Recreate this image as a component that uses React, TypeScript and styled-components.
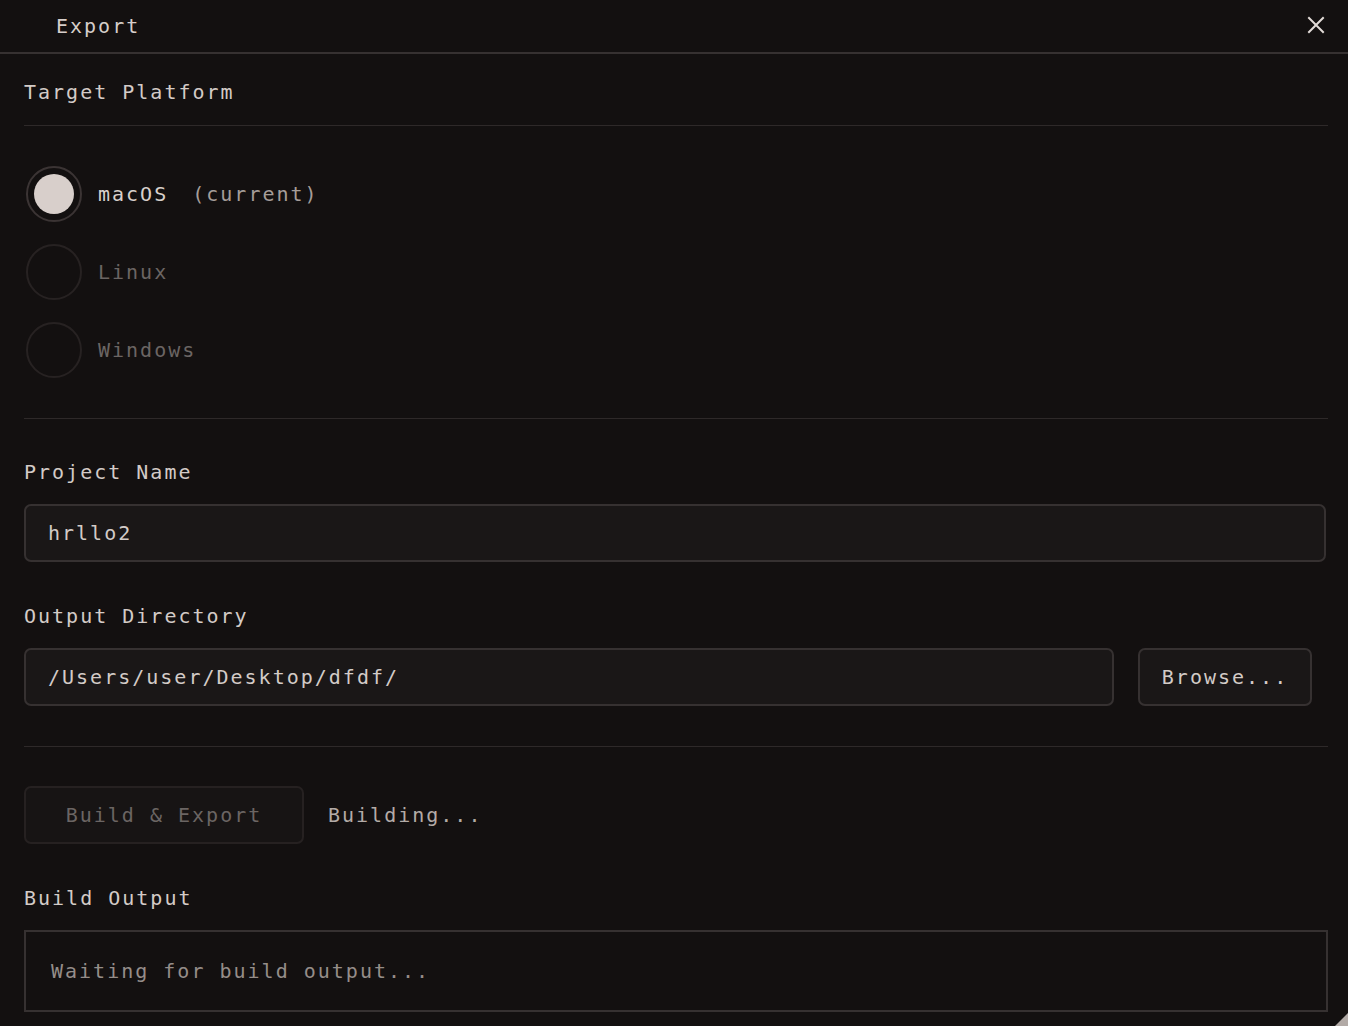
import styled, { createGlobalStyle } from 'styled-components';

const GlobalStyle = createGlobalStyle`
  html, body {
    margin: 0;
    padding: 0;
    background: #131010;
  }
  body {
    font-family: 'DejaVu Sans Mono', 'Liberation Mono', monospace;
    color: #d6ceca;
  }
`;

const Window = styled.div`
  position: relative;
  width: 1348px;
  height: 1026px;
  background: #131010;
  overflow: hidden;
  font-size: 20px;
  letter-spacing: 2px;
  line-height: 24px;
`;

const Header = styled.div`
  height: 52px;
  border-bottom: 2px solid #363131;
  display: flex;
  align-items: center;
  justify-content: space-between;
  padding: 0 20px 0 56px;
`;

const Title = styled.div`
  color: #d6ceca;
`;

const CloseButton = styled.button`
  width: 24px;
  height: 24px;
  padding: 0;
  border: none;
  background: transparent;
  display: flex;
  align-items: center;
  justify-content: center;
  margin-top: -2px;
`;

const Body = styled.div`
  padding: 26px 20px 0 24px;
  display: flex;
  flex-direction: column;
`;

const Label = styled.div<{ gap?: number }>`
  color: #d3cbc7;
  margin-bottom: ${({ gap }) => gap ?? 20}px;
`;

const Divider = styled.div<{ top: number; bottom: number }>`
  height: 1px;
  background: #2e2929;
  margin: ${({ top, bottom }) => `${top}px 0 ${bottom}px`};
`;

const RadioGroup = styled.div`
  display: flex;
  flex-direction: column;
  gap: 22px;
  padding-left: 2px;
`;

const RadioRow = styled.label`
  display: flex;
  align-items: center;
  gap: 16px;
`;

const RadioCircle = styled.span<{ checked?: boolean }>`
  width: 56px;
  height: 56px;
  box-sizing: border-box;
  border-radius: 50%;
  border: 2px solid ${({ checked }) => (checked ? '#3b3434' : '#272222')};
  display: flex;
  align-items: center;
  justify-content: center;
  &::after {
    content: '';
    width: 40px;
    height: 40px;
    border-radius: 50%;
    background: ${({ checked }) => (checked ? '#d8cfcb' : 'transparent')};
  }
`;

const RadioText = styled.span<{ dim?: boolean }>`
  color: ${({ dim }) => (dim ? '#6b6563' : '#d8d0cc')};
`;

const Hint = styled.span`
  color: #a59d99;
  margin-left: 24px;
`;

const Row = styled.div<{ inset?: number; after: number }>`
  display: flex;
  gap: 24px;
  margin-bottom: ${({ after }) => after}px;
  padding-right: ${({ inset }) => inset ?? 0}px;
`;

const Input = styled.div`
  flex: 1;
  height: 58px;
  box-sizing: border-box;
  background: #1a1717;
  border: 2px solid #363131;
  border-radius: 7px;
  padding: 0 22px;
  display: flex;
  align-items: center;
  color: #d3cbc7;
`;

const Button = styled.div<{ disabled?: boolean; width: number }>`
  width: ${({ width }) => width}px;
  height: 58px;
  box-sizing: border-box;
  background: ${({ disabled }) => (disabled ? '#171414' : '#1a1717')};
  border: 2px solid ${({ disabled }) => (disabled ? '#262121' : '#363131')};
  border-radius: 7px;
  display: flex;
  align-items: center;
  justify-content: center;
  color: ${({ disabled }) => (disabled ? '#6b6563' : '#d3cbc7')};
`;

const BuildRow = styled.div`
  display: flex;
  align-items: center;
  gap: 24px;
  margin-bottom: 42px;
`;

const Status = styled.span`
  color: #b3aba7;
`;

const OutputBox = styled.div`
  height: 82px;
  box-sizing: border-box;
  border: 2px solid #363131;
  padding: 0 25px;
  display: flex;
  align-items: center;
  color: #958d89;
`;

const Grip = styled.div`
  position: absolute;
  right: 0;
  bottom: 0;
  width: 0;
  height: 0;
  border-left: 13px solid transparent;
  border-bottom: 13px solid #b2aaa6;
`;

const CloseIcon = () => (
  <svg width="18" height="18" viewBox="0 0 18 18">
    <path d="M2 2 L16 16 M16 2 L2 16" stroke="#e2dbd7" strokeWidth="2" strokeLinecap="square" />
  </svg>
);

export default function App() {
  return (
    <Window>
      <GlobalStyle />
      <Header>
        <Title>Export</Title>
        <CloseButton>
          <CloseIcon />
        </CloseButton>
      </Header>
      <Body>
        <Label gap={0}>Target Platform</Label>
        <Divider top={21} bottom={40} />
        <RadioGroup>
          <RadioRow>
            <RadioCircle checked />
            <RadioText>
              macOS<Hint>(current)</Hint>
            </RadioText>
          </RadioRow>
          <RadioRow>
            <RadioCircle />
            <RadioText dim>Linux</RadioText>
          </RadioRow>
          <RadioRow>
            <RadioCircle />
            <RadioText dim>Windows</RadioText>
          </RadioRow>
        </RadioGroup>
        <Divider top={40} bottom={41} />
        <Label>Project Name</Label>
        <Row inset={2} after={42}>
          <Input>hrllo2</Input>
        </Row>
        <Label>Output Directory</Label>
        <Row inset={16} after={40}>
          <Input>/Users/user/Desktop/dfdf/</Input>
          <Button width={174}>Browse...</Button>
        </Row>
        <Divider top={0} bottom={39} />
        <BuildRow>
          <Button disabled width={280}>
            Build &amp; Export
          </Button>
          <Status>Building...</Status>
        </BuildRow>
        <Label>Build Output</Label>
        <OutputBox>Waiting for build output...</OutputBox>
      </Body>
      <Grip />
    </Window>
  );
}
